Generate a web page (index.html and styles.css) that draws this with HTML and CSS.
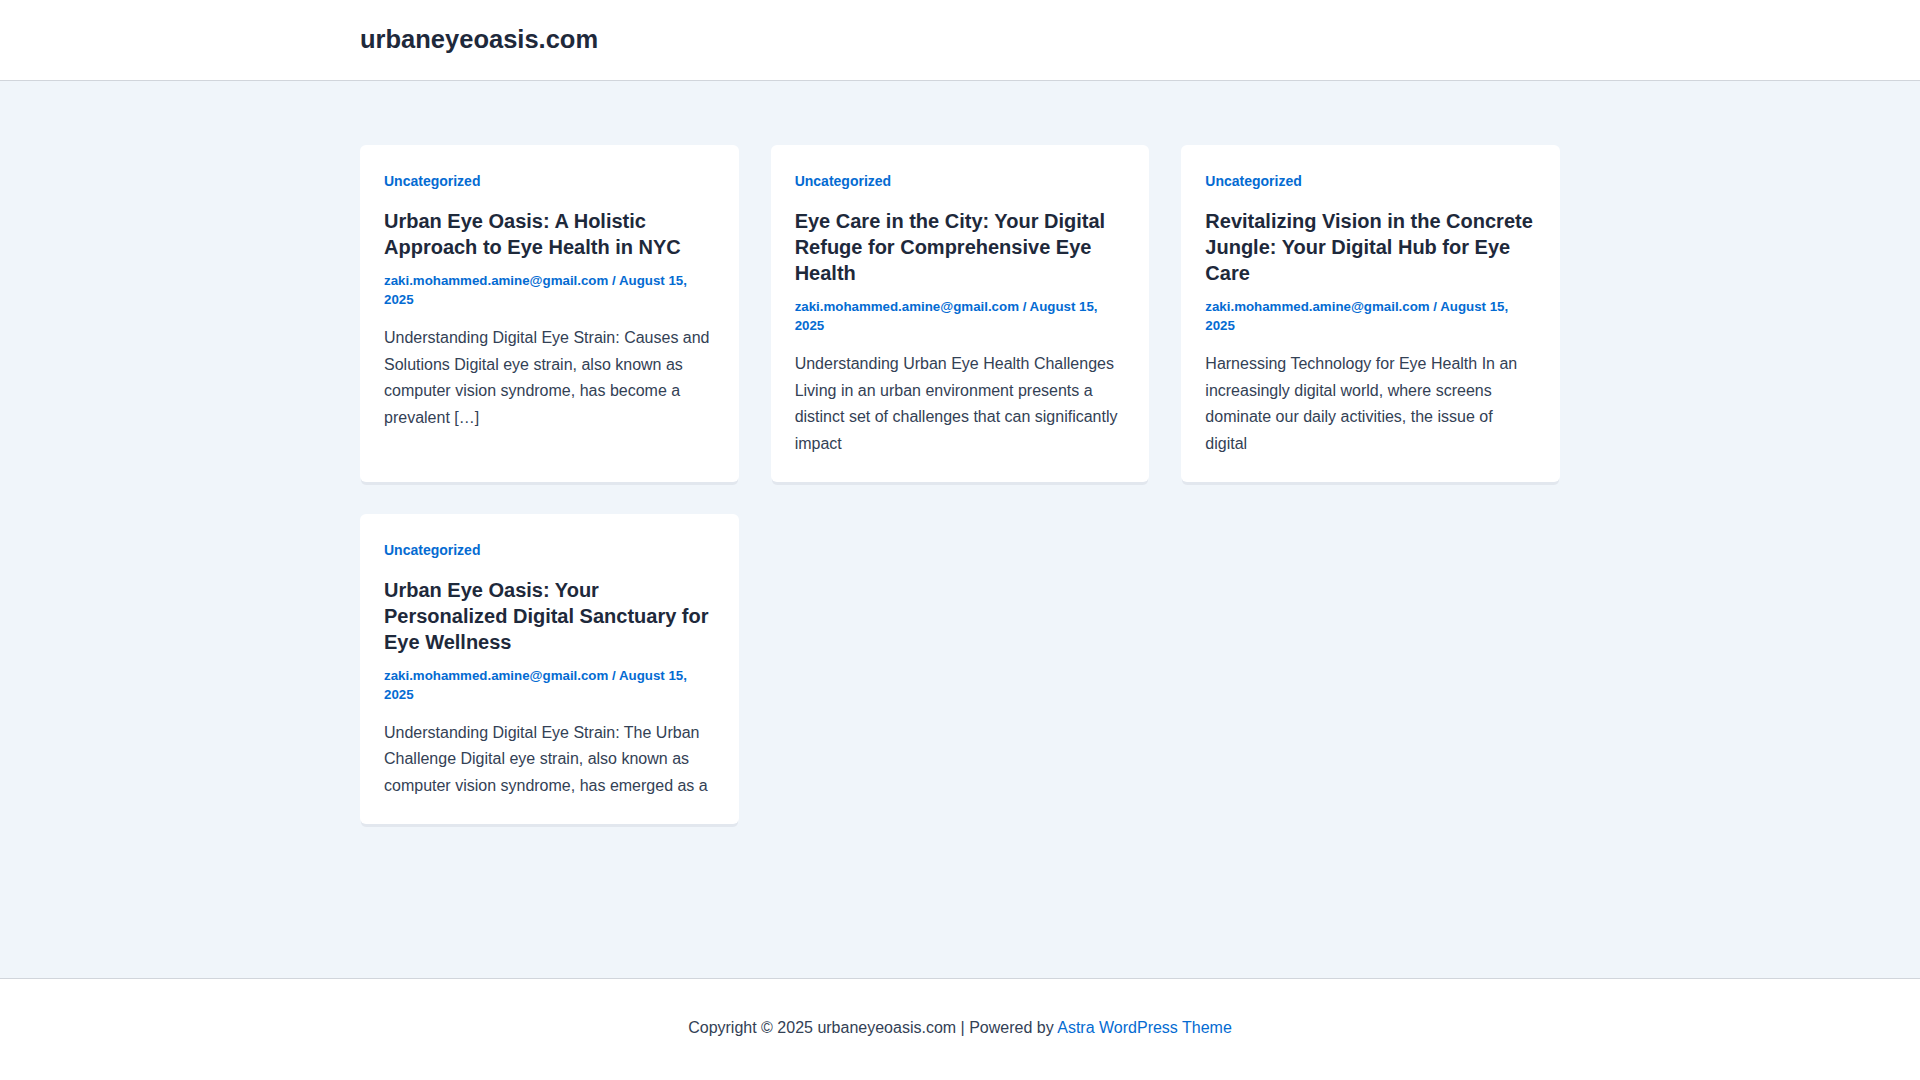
FILE: index.html
```html
<!DOCTYPE html>
<html lang="en-US">
<head>
    <meta charset="UTF-8">
    <meta name="viewport" content="width=device-width, initial-scale=1.0">
    <title>urbaneyeoasis.com</title>
    <link rel="stylesheet" href="styles.css">
</head>
<body>
    <header class="site-header">
        <div class="container">
            <a class="site-title" href="#">urbaneyeoasis.com</a>
        </div>
    </header>

    <main class="site-content">
        <div class="container posts">
            <article class="post-card">
                <a class="post-cat" href="#">Uncategorized</a>
                <h2 class="post-title"><a href="#">Urban Eye Oasis: A Holistic Approach to Eye Health in NYC</a></h2>
                <div class="post-meta"><a href="#">zaki.mohammed.amine@gmail.com</a> / <a href="#">August 15, 2025</a></div>
                <p class="post-excerpt">Understanding Digital Eye Strain: Causes and Solutions Digital eye strain, also known as computer vision syndrome, has become a prevalent […]</p>
            </article>

            <article class="post-card">
                <a class="post-cat" href="#">Uncategorized</a>
                <h2 class="post-title"><a href="#">Eye Care in the City: Your Digital Refuge for Comprehensive Eye Health</a></h2>
                <div class="post-meta"><a href="#">zaki.mohammed.amine@gmail.com</a> / <a href="#">August 15, 2025</a></div>
                <p class="post-excerpt">Understanding Urban Eye Health Challenges Living in an urban environment presents a distinct set of challenges that can significantly impact</p>
            </article>

            <article class="post-card">
                <a class="post-cat" href="#">Uncategorized</a>
                <h2 class="post-title"><a href="#">Revitalizing Vision in the Concrete Jungle: Your Digital Hub for Eye Care</a></h2>
                <div class="post-meta"><a href="#">zaki.mohammed.amine@gmail.com</a> / <a href="#">August 15, 2025</a></div>
                <p class="post-excerpt">Harnessing Technology for Eye Health In an increasingly digital world, where screens dominate our daily activities, the issue of digital</p>
            </article>

            <article class="post-card">
                <a class="post-cat" href="#">Uncategorized</a>
                <h2 class="post-title"><a href="#">Urban Eye Oasis: Your Personalized Digital Sanctuary for Eye Wellness</a></h2>
                <div class="post-meta"><a href="#">zaki.mohammed.amine@gmail.com</a> / <a href="#">August 15, 2025</a></div>
                <p class="post-excerpt">Understanding Digital Eye Strain: The Urban Challenge Digital eye strain, also known as computer vision syndrome, has emerged as a</p>
            </article>
        </div>
    </main>

    <footer class="site-footer">
        <div class="container">
            Copyright © 2025 urbaneyeoasis.com | Powered by <a href="#">Astra WordPress Theme</a>
        </div>
    </footer>
</body>
</html>
```

FILE: styles.css
```css
* {
    box-sizing: border-box;
}
body {
    margin: 0;
    font-family: "Liberation Sans", Arial, sans-serif;
    font-size: 16px;
    color: #334155;
    background-color: #f0f5fa;
}
a {
    color: #046bd2;
    text-decoration: none;
}
.container {
    width: 1200px;
    margin: 0 auto;
}
.site-header {
    background: white;
    border-bottom: 1px solid #d1d5db;
}
.site-header .container {
    height: 80px;
    display: flex;
    align-items: center;
}
.site-title {
    font-size: 25.5px;
    font-weight: bold;
    color: #1e293b;
    margin-top: -2px;
}
.site-content {
    padding: 64px 0 154px;
}
.posts {
    display: grid;
    grid-template-columns: repeat(3, 1fr);
    gap: 32px;
    align-items: stretch;
}
.post-card {
    background: white;
    border-radius: 6px;
    padding: 24px;
    box-shadow: 0px 4px 0px -1px #e2e7ee;
}
.post-cat {
    display: block;
    font-size: 14px;
    font-weight: bold;
    line-height: 25px;
    margin-bottom: 14px;
}
.post-title {
    margin: 0;
    font-size: 20px;
    line-height: 26px;
    font-weight: bold;
}
.post-title a {
    color: #1e293b;
}
.post-meta {
    margin-top: 11px;
    font-size: 13.3px;
    line-height: 19px;
    font-weight: bold;
    color: #046bd2;
}
.post-excerpt {
    margin: 16px 0 0;
    line-height: 26.67px;
}
.site-footer {
    background: white;
    border-top: 1px solid #d1d5db;
    padding: 36px 0 40px;
    text-align: center;
    line-height: 26px;
}
```
